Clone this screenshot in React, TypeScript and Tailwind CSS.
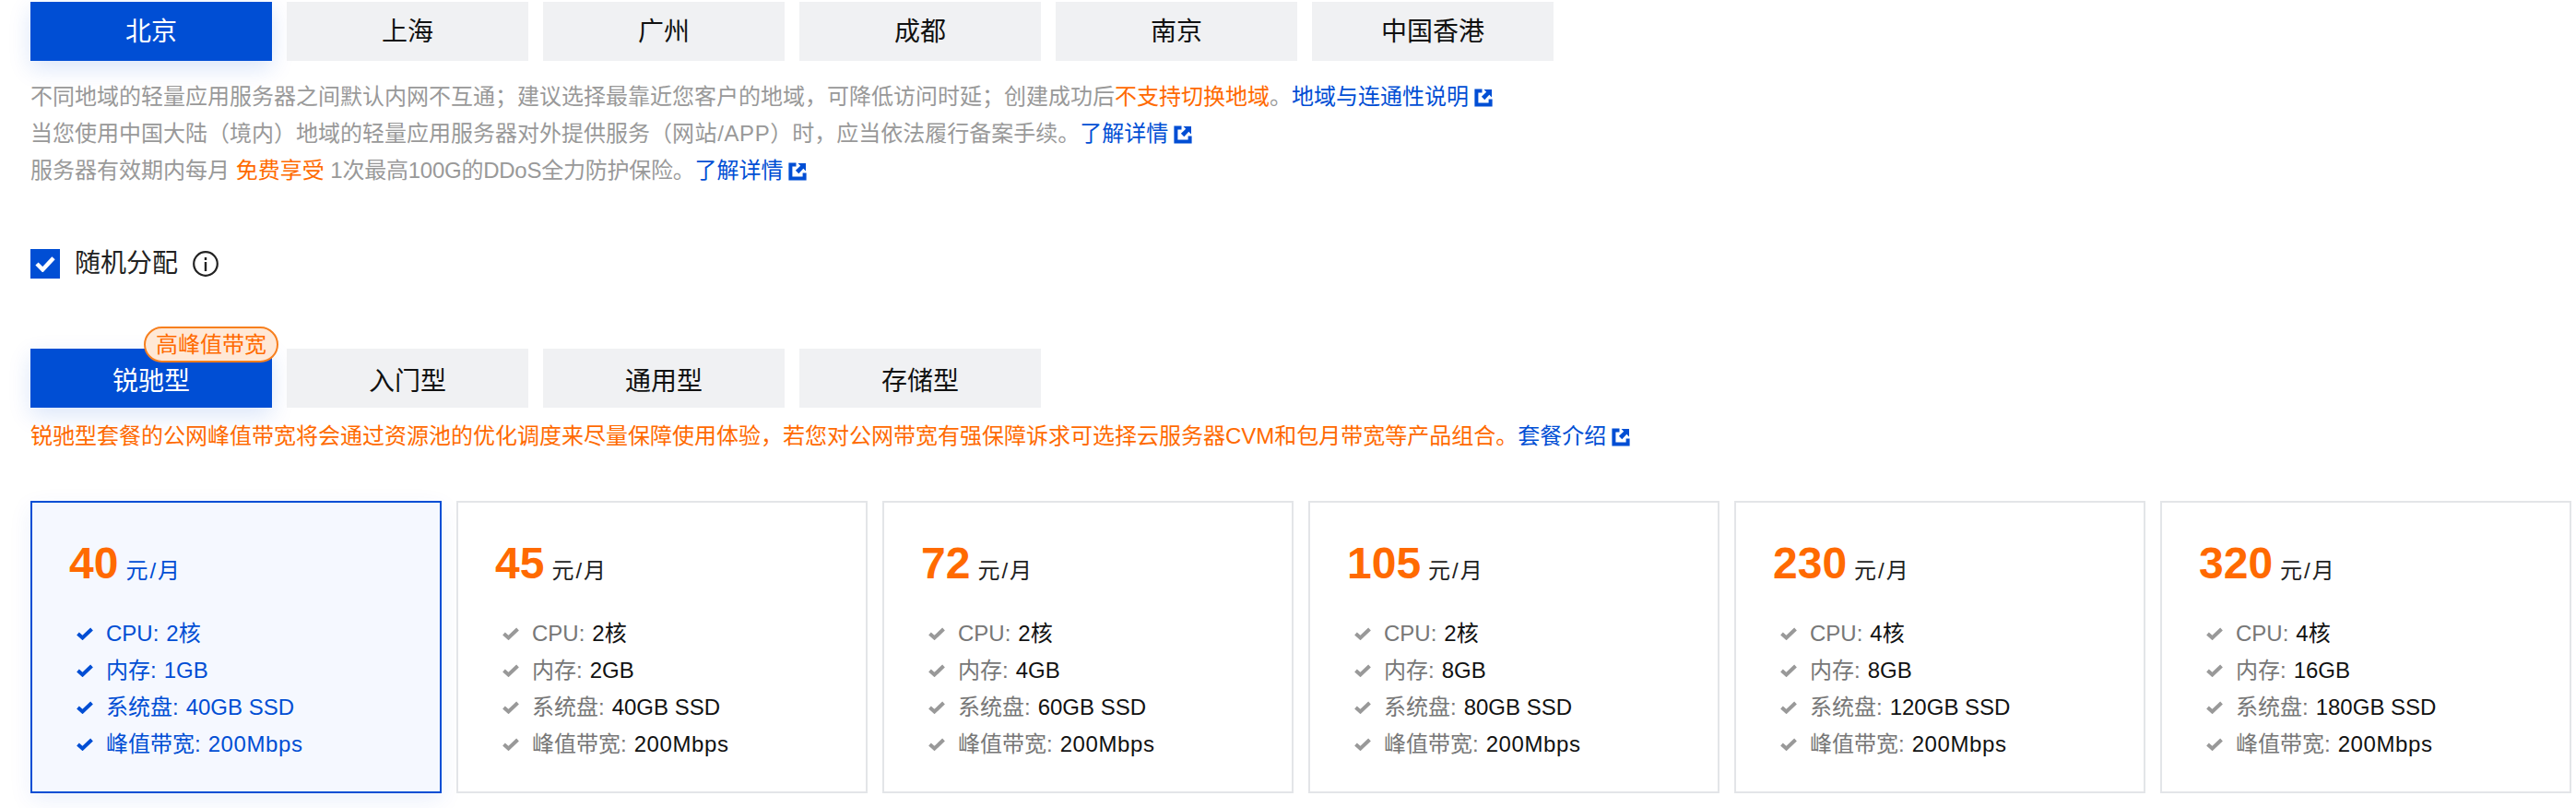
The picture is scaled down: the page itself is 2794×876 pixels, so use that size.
import React from 'react';

const regions = ['北京', '上海', '广州', '成都', '南京', '中国香港'];
const types = ['锐驰型', '入门型', '通用型', '存储型'];

const plans = [
  { price: 40, cpu: '2核', mem: '1GB', disk: '40GB SSD' },
  { price: 45, cpu: '2核', mem: '2GB', disk: '40GB SSD' },
  { price: 72, cpu: '2核', mem: '4GB', disk: '60GB SSD' },
  { price: 105, cpu: '2核', mem: '8GB', disk: '80GB SSD' },
  { price: 230, cpu: '4核', mem: '8GB', disk: '120GB SSD' },
  { price: 320, cpu: '4核', mem: '16GB', disk: '180GB SSD' },
];

const ExternalIcon = () => (
  <svg viewBox="0 0 20 20" className="ml-[6px] inline-block h-5 w-5 align-[-3px]">
    <path d="M8.5 2.4H2.4v15.2h15.2v-6.1" fill="none" stroke="#004ed4" strokeWidth="4" />
    <path d="M10.5 1H19v8.5l-2.7-2.7-5 5.4-3.4-3.4 5.3-5.1z" fill="#004ed4" />
  </svg>
);

const Check = ({ color }: { color: string }) => (
  <svg viewBox="0 0 18 14" className="h-[14px] w-[18px] shrink-0">
    <path d="M1.5 7 6.5 11.5 16.5 2" fill="none" stroke={color} strokeWidth="4" />
  </svg>
);

const Tab = ({ label, active, lower }: { label: string; active?: boolean; lower?: boolean }) => (
  <div
    className={`flex h-16 w-[262px] items-center justify-center text-[28px] ${lower ? 'pt-[8px]' : 'pt-[2px]'} ${
      active ? 'bg-[#004ed4] text-white shadow-[0_8px_24px_rgba(0,82,217,0.15)]' : 'bg-[#f0f1f3] text-[#111]'
    }`}
  >
    {label}
  </div>
);

const Spec = ({ name, value, active, wide }: { name: string; value: string; active: boolean; wide?: boolean }) => (
  <li className="flex h-10 items-center">
    <Check color={active ? '#004ed4' : '#999999'} />
    <span className={`ml-[14px] ${active ? 'text-[#004ed4]' : 'text-[#777]'}`}>{name}:</span>
    <span className={`ml-[8px] ${wide ? 'tracking-[0.6px]' : ''} ${active ? 'text-[#004ed4]' : 'text-[#111]'}`}>
      {value}
    </span>
  </li>
);

const App: React.FC = () => {
  return (
    <div className="h-[876px] w-[2794px] overflow-hidden bg-white pl-[33px] pt-[2px] font-['Liberation_Sans','Noto_Sans_CJK_SC',sans-serif]">
      <div className="flex gap-4">
        {regions.map((r, i) => (
          <Tab key={r} label={r} active={i === 0} />
        ))}
      </div>

      <div className="mt-[19px] text-[24px] leading-10 text-[#999]">
        <p>
          不同地域的轻量应用服务器之间默认内网不互通；建议选择最靠近您客户的地域，可降低访问时延；创建成功后
          <span className="text-[#ff6a00]">不支持切换地域</span>。
          <span className="text-[#004ed4]">地域与连通性说明</span>
          <ExternalIcon />
        </p>
        <p>
          当您使用中国大陆（境内）地域的轻量应用服务器对外提供服务（<span className="tracking-[0.6px]">网站/APP</span>
          ）时，应当依法履行备案手续。
          <span className="text-[#004ed4]">了解详情</span>
          <ExternalIcon />
        </p>
        <p>
          服务器有效期内每月 <span className="text-[#ff6a00]">免费享受</span>{' '}
          <span className="tracking-[-0.25px]">1次最高100G的DDoS全力防护保险。</span>
          <span className="text-[#004ed4]">了解详情</span>
          <ExternalIcon />
        </p>
      </div>

      <div className="mt-[65px] flex h-8 items-center text-[28px] text-[#222]">
        <span className="flex h-8 w-8 items-center justify-center bg-[#004ed4]">
          <svg viewBox="0 0 24 20" className="h-[18px] w-[22px]">
            <path d="M2 10l7 7L22 3" fill="none" stroke="#fff" strokeWidth="5" />
          </svg>
        </span>
        <span className="ml-4">随机分配</span>
        <svg viewBox="0 0 28 28" className="ml-4 h-7 w-7">
          <circle cx="14" cy="14" r="12.8" fill="none" stroke="#222" strokeWidth="2.2" />
          <rect x="12.8" y="7" width="2.4" height="3" fill="#222" />
          <rect x="12.8" y="12" width="2.4" height="10" fill="#222" />
        </svg>
      </div>

      <div className="relative mt-[76px] flex gap-4">
        {types.map((t, i) => (
          <Tab key={t} label={t} active={i === 0} lower />
        ))}
        <span className="absolute left-[123px] top-[-24px] flex h-[39px] w-[146px] items-center justify-center rounded-[20px] border-2 border-[#f77f1e] bg-[#ffe8d6] text-[24px] text-[#ff6a00]">
          高峰值带宽
        </span>
      </div>

      <p className="mt-[11px] text-[24px] leading-10 text-[#ff6a00]">
        锐驰型套餐的公网峰值带宽将会通过资源池的优化调度来尽量保障使用体验，若您对公网带宽有强保障诉求可选择云服务器CVM和包月带宽等产品组合。
        <span className="text-[#004ed4]">套餐介绍</span>
        <ExternalIcon />
      </p>

      <div className="mt-[50px] flex gap-4">
        {plans.map((p, i) => {
          const active = i === 0;
          return (
            <div
              key={p.price}
              className={`h-[317px] w-[446px] border-2 pl-[40px] pt-[38px] text-[24px] ${
                active
                  ? 'border-[#004ed4] bg-[#f5f8ff] shadow-[0_8px_24px_rgba(0,82,217,0.08)]'
                  : 'border-[#e3e5e8] bg-white'
              }`}
            >
              <div className="flex items-baseline leading-[56px]">
                <span className="text-[48px] font-bold text-[#ff6a00]">{p.price}</span>
                <span className={`ml-[8px] tracking-[2px] ${active ? 'text-[#004ed4]' : 'text-[#222]'}`}>元/月</span>
              </div>
              <ul className="mt-[20px] pl-[8px]">
                <Spec name="CPU" value={p.cpu} active={active} />
                <Spec name="内存" value={p.mem} active={active} />
                <Spec name="系统盘" value={p.disk} active={active} />
                <Spec name="峰值带宽" value="200Mbps" active={active} wide />
              </ul>
            </div>
          );
        })}
      </div>
    </div>
  );
};

export default App;
